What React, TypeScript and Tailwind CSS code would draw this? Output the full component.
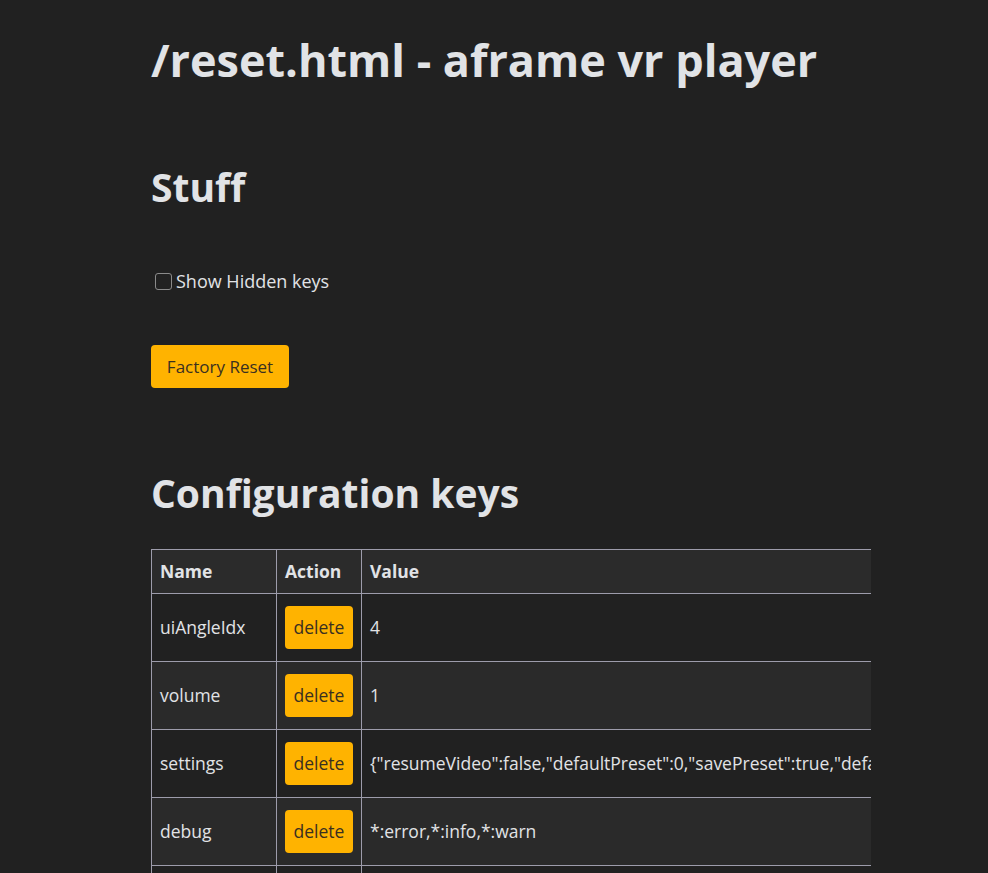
const rows = [
  { name: "uiAngleIdx", value: "4" },
  { name: "volume", value: "1" },
  {
    name: "settings",
    value:
      '{"resumeVideo":false,"defaultPreset":0,"savePreset":true,"defaultStereo":"auto","defaultProjection":"auto"}',
  },
  { name: "debug", value: "*:error,*:info,*:warn" },
  { name: "lastVideo", value: "" },
];

const font = { fontFamily: '"Open Sans", "Noto Sans", sans-serif' };

export default function App() {
  return (
    <div className="min-h-[873px] bg-[#212121] text-[#e1e3e6]" style={font}>
      <div className="ml-[151px] w-[720px] pt-[35px]">
        <h1 className="text-[45px] font-bold leading-[50px]">/reset.html - aframe vr player</h1>

        <h2 className="mt-[77px] text-[39px] font-bold leading-[50px]">Stuff</h2>

        <label className="mt-[56px] flex items-center text-[18px] leading-[27px]">
          <span className="ml-[4px] mr-[4px] h-[17px] w-[17px] rounded-[3px] border border-[#8a8a8a]" />
          Show Hidden keys
        </label>

        <button className="mt-[50px] h-[43px] w-[138px] rounded-[4px] bg-[#ffb300] text-[17px] text-[#3a3020]">
          Factory Reset
        </button>

        <h2 className="mt-[80px] text-[39px] font-bold leading-[50px]">Configuration keys</h2>

        <div className="mt-[31px] overflow-hidden">
          <table className="border-collapse text-[17.5px] whitespace-nowrap">
            <thead>
              <tr className="bg-[#2b2b2b] text-left">
                <th className="h-[44px] border border-[#9d9cab] px-[8px] font-bold">
                  <div className="w-[108px]">Name</div>
                </th>
                <th className="border border-[#9d9cab] px-[8px] font-bold">
                  <div className="w-[68px]">Action</div>
                </th>
                <th className="border border-[#9d9cab] px-[8px] font-bold">Value</th>
              </tr>
            </thead>
            <tbody>
              {rows.map((r, i) => (
                <tr key={r.name} className={i % 2 === 1 ? "bg-[#2a2a2a]" : "bg-[#212121]"}>
                  <td className="h-[68px] border border-[#9d9cab] px-[8px]">{r.name}</td>
                  <td className="border border-[#9d9cab] px-[8px]">
                    <button className="h-[43px] w-[68px] rounded-[4px] bg-[#ffb300] text-[17.5px] text-[#3a3020]">
                      delete
                    </button>
                  </td>
                  <td className="border border-[#9d9cab] px-[8px]">{r.value}</td>
                </tr>
              ))}
            </tbody>
          </table>
        </div>
      </div>
    </div>
  );
}
